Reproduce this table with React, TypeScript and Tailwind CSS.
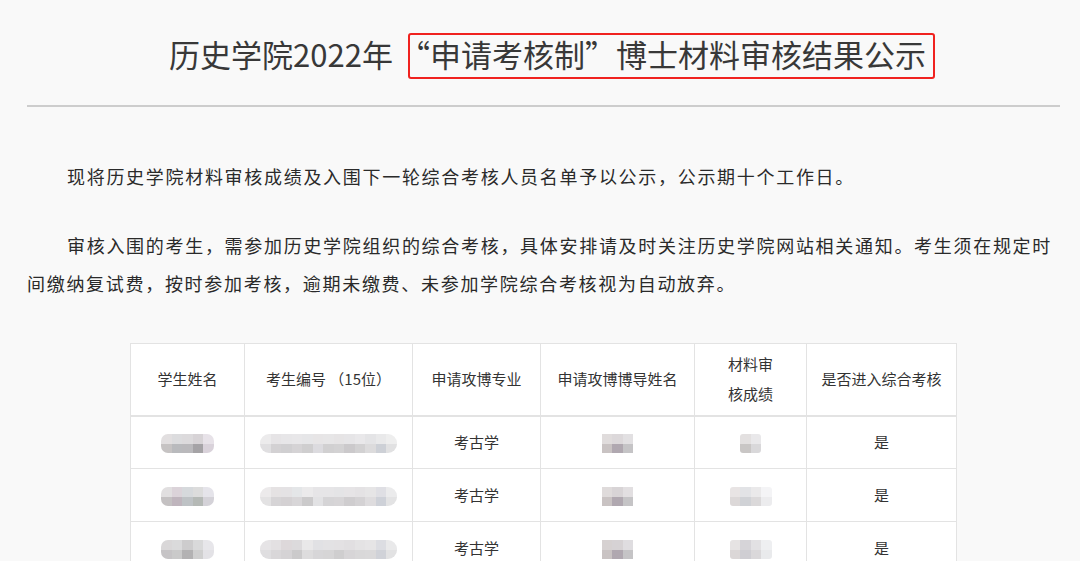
import React from 'react'

type Row = {
  major: string
  pass: string
  name: string[][]
  code: string[][]
  tutor: string[][]
  score: string[][]
}

// pixelated placeholders, colours read off the screenshot
const rows: Row[] = [
  {
    major: '考古学',
    pass: '是',
    name: [
      ['bg-[#e2dfe0]', 'bg-[#dcdcde]', 'bg-[#dcdadc]', 'bg-[#d7d3d6]', 'bg-[#e7e2e8]'],
      ['bg-[#c6c3c3]', 'bg-[#b9babd]', 'bg-[#bab9bc]', 'bg-[#a5a3a6]', 'bg-[#d9d2da]'],
    ],
    code: [
      ['bg-[#ecebec]', 'bg-[#e6e4e6]', 'bg-[#e7e6e8]', 'bg-[#e8e7e9]', 'bg-[#e6e6e8]', 'bg-[#e7e5e6]', 'bg-[#e7e6e7]', 'bg-[#e6e4e5]', 'bg-[#e6e5e7]', 'bg-[#e9e8ea]', 'bg-[#e4e4e6]', 'bg-[#e9e9ea]', 'bg-[#eeeeee]'],
      ['bg-[#e0dfe1]', 'bg-[#d3d1d3]', 'bg-[#d0cfd1]', 'bg-[#d5d3d5]', 'bg-[#cfcecf]', 'bg-[#dcdbdf]', 'bg-[#d1d0d1]', 'bg-[#d3d2d3]', 'bg-[#cbc9cb]', 'bg-[#d2d1d2]', 'bg-[#dcdbdc]', 'bg-[#cdd0d6]', 'bg-[#e1e1e2]'],
    ],
    tutor: [
      ['bg-[#e0dcdc]', 'bg-[#dcd8da]', 'bg-[#e2e0e2]'],
      ['bg-[#c9c3c3]', 'bg-[#b0a8b0]', 'bg-[#c5c4c6]'],
    ],
    score: [
      ['bg-[#e3e0e0]', 'bg-[#e9e8ea]'],
      ['bg-[#c9c6c5]', 'bg-[#d9d8da]'],
    ],
  },
  {
    major: '考古学',
    pass: '是',
    name: [
      ['bg-[#e1dfe0]', 'bg-[#dbd3d9]', 'bg-[#d6d9dc]', 'bg-[#dcdcdc]', 'bg-[#e5e4ea]'],
      ['bg-[#c4c1c2]', 'bg-[#bfb5bd]', 'bg-[#bec2c5]', 'bg-[#b5b9b6]', 'bg-[#d4d2d8]'],
    ],
    code: [
      ['bg-[#eceaeb]', 'bg-[#e5e2e3]', 'bg-[#e4e2e4]', 'bg-[#e4e6e8]', 'bg-[#ebeaeb]', 'bg-[#e6e5e7]', 'bg-[#e6e5e7]', 'bg-[#e4e4e6]', 'bg-[#e6e4e6]', 'bg-[#e4e2e4]', 'bg-[#e6e5e6]', 'bg-[#dfdfe4]', 'bg-[#ebebec]'],
      ['bg-[#e3e2e3]', 'bg-[#d6d4d6]', 'bg-[#d4d1d3]', 'bg-[#d8d6d8]', 'bg-[#cbcacb]', 'bg-[#e2e2e4]', 'bg-[#d5d4d6]', 'bg-[#d7d5d7]', 'bg-[#cfcdcf]', 'bg-[#d4d2d4]', 'bg-[#dedcde]', 'bg-[#ced1d8]', 'bg-[#e3e3e4]'],
    ],
    tutor: [
      ['bg-[#dfdbdb]', 'bg-[#d8d4d6]', 'bg-[#e2dfe1]'],
      ['bg-[#c9c3c3]', 'bg-[#b0a8b0]', 'bg-[#c5c4c6]'],
    ],
    score: [
      ['bg-[#e8e4e4]', 'bg-[#e2e3e6]', 'bg-[#eae9ea]', 'bg-[#f4f4f6]'],
      ['bg-[#dcd8d8]', 'bg-[#d0d2d6]', 'bg-[#dbd9da]', 'bg-[#ececee]'],
    ],
  },
  {
    major: '考古学',
    pass: '是',
    name: [
      ['bg-[#d9d7d8]', 'bg-[#dadadb]', 'bg-[#cdcccd]', 'bg-[#d9d9da]', 'bg-[#e7e6ea]'],
      ['bg-[#c6c4c6]', 'bg-[#cacaca]', 'bg-[#b3b2b3]', 'bg-[#cfcfcf]', 'bg-[#e3e2e6]'],
    ],
    code: [
      ['bg-[#e6e4e6]', 'bg-[#e3e0e2]', 'bg-[#ddd8da]', 'bg-[#dcdadc]', 'bg-[#e9e8e9]', 'bg-[#e1e1e4]', 'bg-[#e3e2e4]', 'bg-[#e3e1e3]', 'bg-[#e1dfe1]', 'bg-[#e4e3e4]', 'bg-[#e6e5e6]', 'bg-[#dcdde2]', 'bg-[#e9e9ea]'],
      ['bg-[#dfdee0]', 'bg-[#d9d7d9]', 'bg-[#d5d3d5]', 'bg-[#cbcacb]', 'bg-[#dddcdd]', 'bg-[#d7d6d8]', 'bg-[#d6d5d6]', 'bg-[#cfcecf]', 'bg-[#d7d5d7]', 'bg-[#d9d8d9]', 'bg-[#dad9da]', 'bg-[#d0d2d8]', 'bg-[#e2e2e3]'],
    ],
    tutor: [
      ['bg-[#d6d1d1]', 'bg-[#d6d2d4]', 'bg-[#dfdde0]'],
      ['bg-[#c9c3c3]', 'bg-[#b0a8b0]', 'bg-[#c5c4c6]'],
    ],
    score: [
      ['bg-[#e6e3e3]', 'bg-[#d6d4d8]', 'bg-[#e2e1e3]', 'bg-[#eeeff1]'],
      ['bg-[#dbd7d7]', 'bg-[#cfced3]', 'bg-[#dad8da]', 'bg-[#e9eaec]'],
    ],
  },
  {
    major: '考古学',
    pass: '是',
    name: [
      ['bg-[#dedcdd]', 'bg-[#d6d4d6]', 'bg-[#d2d3d6]', 'bg-[#dcdadc]', 'bg-[#e8e6ea]'],
      ['bg-[#c3c1c2]', 'bg-[#bcb7bb]', 'bg-[#c0c2c4]', 'bg-[#bbbcbb]', 'bg-[#dad8dc]'],
    ],
    code: [
      ['bg-[#eae8e9]', 'bg-[#e3e1e2]', 'bg-[#e1dfe1]', 'bg-[#e3e4e6]', 'bg-[#e9e8e9]', 'bg-[#e4e3e5]', 'bg-[#e5e4e6]', 'bg-[#e3e2e4]', 'bg-[#e4e2e4]', 'bg-[#e3e1e3]', 'bg-[#e5e4e5]', 'bg-[#dedee3]', 'bg-[#eaeaeb]'],
      ['bg-[#dedde0]', 'bg-[#d5d3d5]', 'bg-[#d2d0d2]', 'bg-[#d3d1d3]', 'bg-[#d4d3d4]', 'bg-[#dad9db]', 'bg-[#d4d3d4]', 'bg-[#d2d1d2]', 'bg-[#d2d0d2]', 'bg-[#d6d5d6]', 'bg-[#dbdadb]', 'bg-[#cfd1d7]', 'bg-[#e1e1e2]'],
    ],
    tutor: [
      ['bg-[#dcd8d8]', 'bg-[#d8d4d6]', 'bg-[#e1dee1]'],
      ['bg-[#c9c3c3]', 'bg-[#b0a8b0]', 'bg-[#c5c4c6]'],
    ],
    score: [
      ['bg-[#e5e2e2]', 'bg-[#dcdadd]', 'bg-[#e6e5e7]', 'bg-[#f0f0f2]'],
      ['bg-[#d9d5d5]', 'bg-[#cfcfd3]', 'bg-[#dad8da]', 'bg-[#eaebed]'],
    ],
  },
]

const Mosaic = ({ cells, cell = 'w-[10.5px]', rounded = 'rounded-[7px]' }: { cells: string[][]; cell?: string; rounded?: string }) => (
  <div className={`inline-flex flex-col overflow-hidden align-middle ${rounded}`}>
    {cells.map((line, i) => (
      <div className="flex" key={i}>
        {line.map((c, j) => (
          <span key={j} className={`h-[9.5px] ${cell} ${c}`} />
        ))}
      </div>
    ))}
  </div>
)

const headers = ['学生姓名', '考生编号 （15位）', '申请攻博专业', '申请攻博博导姓名', '', '是否进入综合考核']

const App = () => {
  return (
    <div className="min-h-screen bg-[#f9f9f9] text-[#333] font-['Noto_Sans_CJK_SC','Noto_Sans',sans-serif]">
      <div className="ml-[27px] w-[1033px] pt-[33px]">
        <h1 className="flex items-start justify-center pl-[17px] text-[31px] font-normal text-[#383838]">
          <span className="mt-[2px] leading-[37px]">历史学院2022年</span>
          <span className="ml-[15px] rounded-[3px] border-2 border-[#f0221f] pb-[5px] pl-[4px] pr-[7px] leading-[37px]">
            <span className="-ml-[15px]">“</span>申请考核制”博士材料审核结果公示
          </span>
        </h1>

        <div className="mt-[26px] h-[2px] bg-[#cdcdcd]" />

        <div className="mt-[50px] text-[18px] leading-[38px] tracking-[1.7px] text-[#2a2a2a]">
          <p className="indent-[40px]">现将历史学院材料审核成绩及入围下一轮综合考核人员名单予以公示，公示期十个工作日。</p>
          <p className="mt-[31px] indent-[40px]">
            审核入围的考生，需参加历史学院组织的综合考核，具体安排请及时关注历史学院网站相关通知。考生须在规定时间缴纳复试费，按时参加考核，逾期未缴费、未参加学院综合考核视为自动放弃。
          </p>
        </div>

        <table className="mx-auto mt-[41px] w-[826px] table-fixed border-collapse bg-white text-center text-[15px] text-[#333]">
          <colgroup>
            <col className="w-[114px]" />
            <col className="w-[168px]" />
            <col className="w-[128px]" />
            <col className="w-[154px]" />
            <col className="w-[112px]" />
            <col className="w-[150px]" />
          </colgroup>
          <thead>
            <tr className="h-[72px] border-b-2 border-[#e3e3e3]">
              {headers.map((h, i) => (
                <th key={i} className="border border-[#e3e3e3] px-1 font-normal leading-[30px]">
                  {i === 4 ? (
                    <>
                      材料审
                      <br />
                      核成绩
                    </>
                  ) : (
                    h
                  )}
                </th>
              ))}
            </tr>
          </thead>
          <tbody>
            {rows.map((r, i) => (
              <tr key={i} className="h-[53px]">
                <td className="border border-[#e3e3e3]">
                  <Mosaic cells={r.name} />
                </td>
                <td className="border border-[#e3e3e3]">
                  <Mosaic cells={r.code} cell="w-[10.5px]" rounded="rounded-[9px]" />
                </td>
                <td className="border border-[#e3e3e3]">{r.major}</td>
                <td className="border border-[#e3e3e3]">
                  <Mosaic cells={r.tutor} rounded="rounded-none" />
                </td>
                <td className="border border-[#e3e3e3]">
                  <Mosaic cells={r.score} rounded="rounded-[3px]" />
                </td>
                <td className="border border-[#e3e3e3]">{r.pass}</td>
              </tr>
            ))}
          </tbody>
        </table>
      </div>
    </div>
  )
}

export default App
